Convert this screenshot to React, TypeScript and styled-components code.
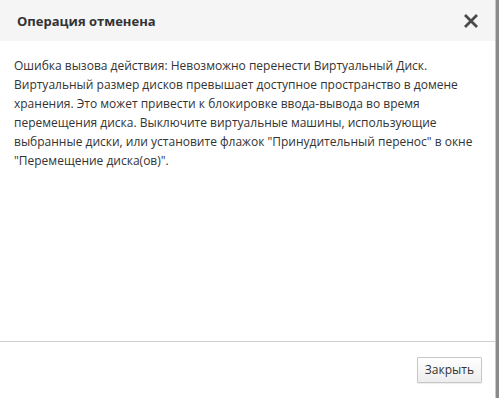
import React from "react";
import styled, { createGlobalStyle } from "styled-components";

const GlobalStyle = createGlobalStyle`
  html, body {
    margin: 0;
    padding: 0;
    background: #8a8a8a;
  }
  body {
    font-family: "Open Sans", "Noto Sans", sans-serif;
  }
`;

const Dialog = styled.div`
  width: 496px;
  height: 398px;
  background: #fff;
  display: flex;
  flex-direction: column;
  border-right: 1px solid #c8c8c8;
  box-sizing: border-box;
`;

const Header = styled.div`
  height: 41px;
  background: #f5f5f5;
  display: flex;
  align-items: center;
  justify-content: space-between;
  padding: 0 16px 0 17px;
  box-sizing: border-box;
`;

const Title = styled.h4`
  margin: 0;
  font-size: 13px;
  font-weight: 700;
  color: #333;
`;

const CloseButton = styled.button`
  border: 0;
  background: none;
  padding: 0;
  width: 17px;
  height: 17px;
  display: flex;
  align-items: center;
  justify-content: center;
  cursor: pointer;
`;

const Body = styled.div`
  flex: 1;
  padding: 15px 14px 0 14px;
  font-size: 12px;
  line-height: 19px;
  color: #333;
`;

const Footer = styled.div`
  border-top: 1px solid #d0d0d0;
  height: 57px;
  display: flex;
  align-items: center;
  justify-content: flex-end;
  padding: 0 13px;
  box-sizing: border-box;
`;

const Button = styled.button`
  font-family: "Open Sans", "Noto Sans", sans-serif;
  font-size: 12px;
  color: #333;
  background: linear-gradient(#fff, #ededed);
  border: 1px solid #c8c8c8;
  border-radius: 1px;
  height: 26px;
  padding: 0 7px;
  margin-top: -1px;
  box-shadow: 0 1px 1px rgba(0, 0, 0, 0.08);
`;

export default function App() {
  return (
    <>
      <GlobalStyle />
      <Dialog>
        <Header>
          <Title>Операция отменена</Title>
          <CloseButton aria-label="close">
            <svg width="16" height="16" viewBox="0 0 16 16">
              <path d="M2 2 L14 14 M14 2 L2 14" stroke="#4a4a4a" strokeWidth="2.8" />
            </svg>
          </CloseButton>
        </Header>
        <Body>
          Ошибка вызова действия: Невозможно перенести Виртуальный Диск. Виртуальный
          размер дисков превышает доступное пространство в домене хранения. Это может
          привести к блокировке ввода-вывода во время перемещения диска. Выключите
          виртуальные машины, использующие выбранные диски, или установите флажок
          "Принудительный перенос" в окне "Перемещение диска(ов)".
        </Body>
        <Footer>
          <Button>Закрыть</Button>
        </Footer>
      </Dialog>
    </>
  );
}
